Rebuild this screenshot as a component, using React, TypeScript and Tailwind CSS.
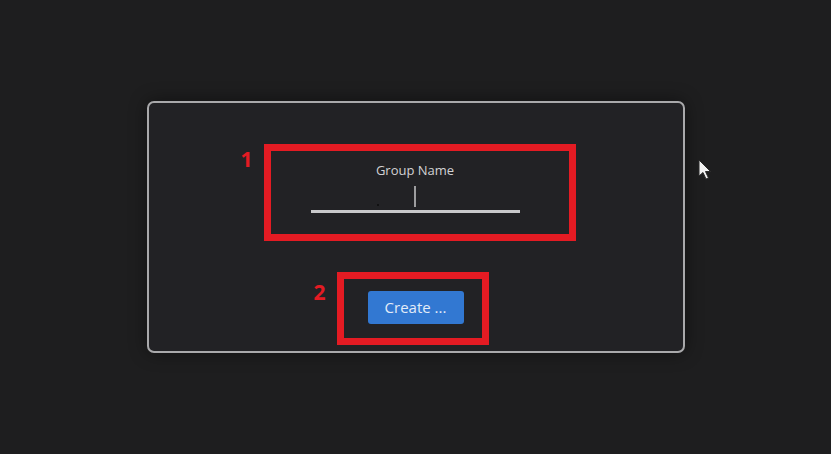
import { useState } from "react"

function Pointer() {
  return (
    <svg width="14" height="22" viewBox="0 0 14 22" className="absolute left-[698px] top-[159px]">
      <path
        d="M1 1 L1 17 L5 13.5 L8 20 L10.5 19 L7.5 12.5 L12.5 12.5 Z"
        fill="#f2f2f2"
        stroke="#2a2a2a"
        strokeWidth="1"
        strokeLinejoin="round"
      />
    </svg>
  )
}

export default function App() {
  const [name, setName] = useState("")

  return (
    <div
      className="relative flex h-[454px] w-full items-center justify-center bg-[#1e1e1f]"
      style={{ fontFamily: '"Open Sans", "Noto Sans", sans-serif' }}
    >
      <div className="flex h-[252px] w-[538px] flex-col items-center rounded-[7px] border-2 border-[#a9a9ab] bg-[#222225] pt-[41px] shadow-[0_0_18px_rgba(0,0,0,0.45)]">
        {/* step 1: group name field */}
        <div className="relative ml-[8px] flex h-[97px] w-[312px] flex-col items-center border-[7px] border-[#e41b23] pt-[10px]">
          <span className="absolute left-[-30px] top-[-2px] text-[21px] font-bold leading-none text-[#e41b23]">1</span>
          <label className="ml-[-9px] text-[13px] leading-[18px] text-[#d2d2d4]">Group Name</label>
          <div className="relative ml-[-8px] w-[209px]">
            <input
              value={name}
              onChange={(e) => setName(e.target.value)}
              className="h-[34px] w-full border-b-[3px] border-[#c9c9cb] bg-transparent text-center text-[13px] text-[#d2d2d4] outline-none"
            />
            <span className="absolute left-[103px] top-[7px] h-[21px] w-[2px] bg-[#9d9d9f]" />
            <span className="absolute left-[66px] top-[25px] h-[2px] w-[2px] rounded-full bg-[#0c0c0c]" />
          </div>
        </div>

        {/* step 2: create button */}
        <div className="relative mt-[31px] ml-[-6px] flex h-[73px] w-[152px] items-start border-[7px] border-[#e41b23] pl-[24px] pt-[12px]">
          <span className="absolute left-[-30px] top-[3px] text-[21px] font-bold leading-none text-[#e41b23]">2</span>
          <button className="h-[33px] w-[96px] rounded-[3px] bg-[#3278d2] text-[15px] leading-none text-[#e3ecf8]">
            Create ...
          </button>
        </div>
      </div>
      <Pointer />
    </div>
  )
}
